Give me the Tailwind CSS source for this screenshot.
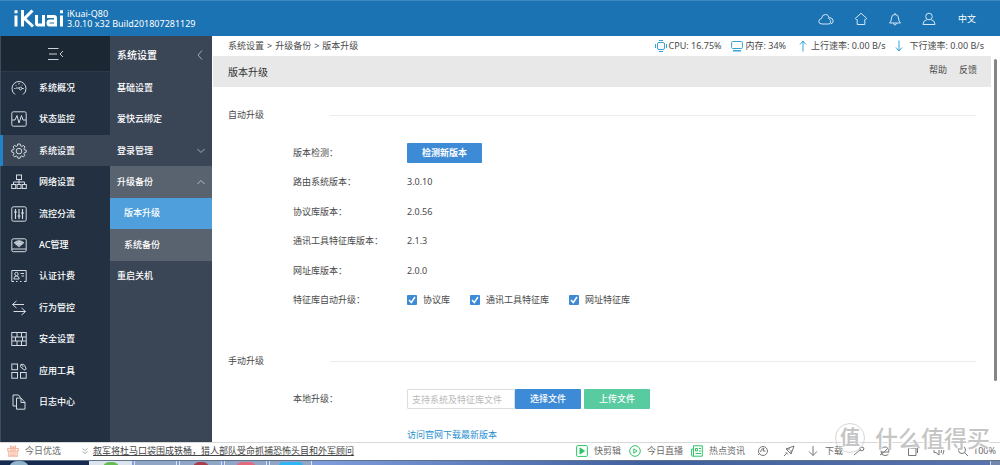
<!DOCTYPE html>
<html lang="zh-CN">
<head>
<meta charset="utf-8">
<meta name="viewport" content="width=device-width, initial-scale=1">
<title>iKuai 版本升级</title>
<script src="https://cdn.jsdelivr.net/npm/@tailwindcss/browser@4"></script>
</head>
<body class="flex h-screen flex-col overflow-hidden bg-white font-['Noto_Sans','Noto_Sans_CJK_SC',sans-serif] text-[9px] leading-3 text-[#4a4a4a]">

<header class="flex h-9 shrink-0 items-center border-t border-[#3d8ac2] bg-[#1b73b3] pr-6 pl-3 text-white">
  <svg class="h-5 w-[53px]" viewBox="0 0 53 20" fill="none" stroke="#fff" stroke-width="3" role="img" aria-label="iKuai">
    <path d="M4 6.500V17.500M10.500 1V17.500M20.500 1.500L12.500 9.500L21 17.500M24.500 6V14.500Q24.500 16 26 16H31.500M31.500 6V17.500M35 7.500H42Q43.500 7.500 43.500 9V16H37.500Q36 16 36 14Q36 12 37.500 12H43.500M49.500 6.500V17.500"/>
    <path d="M2.500 2.800H5.500M48 2.800H51"/>
  </svg>
  <div class="ml-0.5 leading-[10px]">
    <p>iKuai-Q80</p>
    <p>3.0.10 x32 Build201807281129</p>
  </div>
  <nav class="ml-auto flex items-center gap-5" aria-label="快捷入口">
    <button aria-label="云"><svg class="h-3.5 w-4" viewBox="0 0 16 14" fill="none" stroke="#cfe6f7"><path d="M4 12H11Q13.500 11 12.500 8.500Q11.800 7 11 7Q11 2.500 7.500 2.500Q4 2.500 3.500 6.500Q.8 7 .8 9.500Q.8 12 4 12ZM11.500 5.500Q15.200 6 15.200 9Q15.200 11.500 12.500 12"/></svg></button>
    <button aria-label="首页"><svg class="h-3.5 w-3.5" viewBox="0 0 14 14" fill="none" stroke="#cfe6f7"><path d="M7 1.200L12.800 6.500L11.500 7.500H10.800V12.500H3.200V7.500H2.500L1.200 6.500Z"/></svg></button>
    <button aria-label="通知"><svg class="h-3.5 w-3.5" viewBox="0 0 14 14" fill="none" stroke="#cfe6f7"><path d="M7 1V2.500M1.500 11H12.500Q10.500 9.500 10.500 6Q10.500 2.500 7 2.500Q3.500 2.500 3.500 6Q3.500 9.500 1.500 11ZM5.500 11.200Q5.800 13 7 13Q8.200 13 8.500 11.200"/></svg></button>
    <button aria-label="用户"><svg class="h-3.5 w-3.5" viewBox="0 0 14 14" fill="none" stroke="#cfe6f7"><circle cx="7" cy="4.500" r="3.300"/><path d="M4.800 7.700Q1 8.500 1 12.500H13Q13 8.500 9.200 7.700"/></svg></button>
    <button class="pl-0.5">中文</button>
  </nav>
</header>

<div class="flex min-h-0 flex-1">
  <aside class="w-[110px] shrink-0 border-l border-[#3d4c5e] bg-[#223041] font-medium text-white">
    <button class="flex h-9 w-full items-center justify-center border-b border-[#2c3a4b] bg-[#1c2734]" aria-label="收起菜单">
      <svg class="h-3.5 w-4" viewBox="0 0 16 14" fill="none" stroke="#c9d0d8"><path d="M0 1.500H10.500M1 7H9M0 12.500H10.500M15 4L12 7L15 10"/></svg>
    </button>
    <nav class="flex h-[346px] flex-col [&>a]:flex [&>a]:flex-1 [&>a]:items-center [&>a]:gap-3 [&>a]:pl-2.5 [&_svg]:size-4 [&_svg]:fill-none [&_svg]:stroke-[#d5dbe1]" aria-label="主菜单">
      <a href="#"><svg viewBox="0 0 16 16"><path d="M4 14.500Q1 12.500 1 8.500A7 7 0 0 1 15 8.500Q15 12.500 12 14.500M5 8H8.500M8 3V4.500M12.800 8.500H11M3.200 8.500H4.500M4.500 5L5.300 5.800M11.500 5L10.700 5.800"/><circle cx="9.500" cy="8.500" r="1.300"/></svg>系统概况</a>
      <a href="#"><svg viewBox="0 0 16 16"><rect x=".8" y=".8" width="14.400" height="14.400" rx="1.500"/><path d="M1 9H4L6 4.500L8 12L10.500 4.500L12 9H15"/></svg>状态监控</a>
      <a href="#" class="-ml-px border-l-[3px] border-[#2383c9] bg-[#3a4656] !pl-2" aria-current="page"><svg viewBox="0 0 16 16"><path d="M6.800 1H9.200L9.700 2.900L10.800 3.400L12.600 2.500L14 4L13 5.700L13.400 6.800L15.200 7.200V9.200L13.400 9.700L12.900 10.800L13.800 12.500L12.300 14L10.600 13L9.600 13.500L9.100 15.200H6.900L6.400 13.500L5.300 13L3.600 13.900L2.100 12.400L3 10.700L2.600 9.600L.8 9.100V7L2.600 6.600L3 5.500L2.100 3.800L3.600 2.400L5.300 3.300L6.400 2.900Z"/><circle cx="8" cy="8.100" r="2.800"/></svg>系统设置</a>
      <a href="#"><svg viewBox="0 0 16 16"><rect x="5.500" y="1" width="5" height="4.500"/><path d="M8 5.500V10.500M2.500 10.500V8H13.500V10.500"/><rect x=".7" y="10.500" width="4" height="4"/><rect x="6" y="10.500" width="4" height="4"/><rect x="11.300" y="10.500" width="4" height="4"/></svg>网络设置</a>
      <a href="#"><svg viewBox="0 0 16 16"><rect x=".8" y=".8" width="14.400" height="14.400" rx="1.500"/><path d="M4.500 3V13M8 3V13M11.500 3V13M3 6H6M6.500 10H9.500M10 7H13" stroke-width="1.200"/></svg>流控分流</a>
      <a href="#"><svg viewBox="0 0 16 16"><rect x=".8" y="1.800" width="14.400" height="12.900" rx="1.500"/><path d="M1 12H15"/><path d="M3 6Q8 1.500 13 6L8 10.500Z" fill="#aeb8c2" stroke="none"/><path d="M3 6Q8 1.500 13 6M4.800 7.500Q8 4.500 11.200 7.500"/></svg>AC管理</a>
      <a href="#"><svg viewBox="0 0 16 16"><path d="M3 13.500H.8V2.500H15.200V13.500H13M5 13.500H6.500M9 13.500H10.500M9.500 5.500H13M10.500 8H13"/><circle cx="5.500" cy="6" r="1.700"/><path d="M2.800 11Q3 8 5.500 8Q8 8 8.200 11Z"/></svg>认证计费</a>
      <a href="#"><svg viewBox="0 0 16 16"><path d="M13 4.500H1.500M5.500 1L1.500 4.500L5.500 8M2.500 11.500H14.500M10.500 8L14.500 11.500L10.500 15"/></svg>行为管控</a>
      <a href="#"><svg viewBox="0 0 16 16"><rect x=".8" y="1.500" width="14.400" height="13"/><path d="M1 6H15M1 10H15M6 1.500V6M10.500 1.500V6M4.500 6V10M11.500 6V10M6 10V14.500M10.500 10V14.500"/></svg>安全设置</a>
      <a href="#"><svg viewBox="0 0 16 16"><rect x=".8" y="1" width="5.700" height="5.700"/><rect x=".8" y="9.500" width="5.700" height="5.700"/><rect x="9.500" y="9.500" width="5.700" height="5.700"/><path d="M10 1.500Q8.500 3.500 10.500 5L14 7.200L15.200 6L13.800 2.500Q12 .5 10 1.500L12 3.500L11 4.500"/></svg>应用工具</a>
      <a href="#"><svg viewBox="0 0 16 16"><path d="M5 12H2V1H7.500L9.500 3.500"/><path d="M5.500 4H10L14 8.500V15.200H5.500ZM10 4V8.500H14"/></svg>日志中心</a>
    </nav>
  </aside>

  <aside class="w-[102px] shrink-0 bg-[#3a4656] font-medium text-white">
    <div class="flex h-[38px] items-center justify-between pr-[9px] pl-[7px] text-[10px]">
      <h2>系统设置</h2>
      <button aria-label="收起"><svg class="h-2.5 w-1.5" viewBox="0 0 6 10" fill="none" stroke="#a5adb6"><path d="M5 .5L1 5L5 9.500"/></svg></button>
    </div>
    <nav class="-mt-0.5 flex h-[220px] flex-col [&>a]:flex [&>a]:flex-1 [&>a]:items-center [&>a]:justify-between [&>a]:pr-[7px] [&>a]:pl-[7px]" aria-label="子菜单">
      <a href="#">基础设置</a>
      <a href="#">爱快云绑定</a>
      <a href="#">登录管理<svg class="h-1.5 w-2" viewBox="0 0 8 6" fill="none" stroke="#a5adb6"><path d="M.5 1L4 4.500L7.500 1"/></svg></a>
      <a href="#" class="bg-[#59636f]">升级备份<svg class="h-1.5 w-2" viewBox="0 0 8 6" fill="none" stroke="#b5bbc2"><path d="M.5 5L4 1.500L7.500 5"/></svg></a>
      <a href="#" class="bg-[#4e9fdb] !pl-3.5" aria-current="page">版本升级</a>
      <a href="#" class="bg-[#59636f] !pl-3.5">系统备份</a>
      <a href="#">重启关机</a>
    </nav>
  </aside>

  <main class="relative min-w-0 flex-1 overflow-hidden pl-px">
    <div class="flex h-5 items-center justify-between pr-4 pl-[15px]">
      <nav class="flex gap-[3px]" aria-label="面包屑"><a href="#">系统设置</a><span>&gt;</span><a href="#">升级备份</a><span>&gt;</span><span>版本升级</span></nav>
      <ul class="flex items-center gap-[9px] [&>li]:flex [&>li]:items-center [&>li]:gap-1 [&_svg]:h-3 [&_svg]:fill-none [&_svg]:stroke-[#36a2da]">
        <li class="!gap-0.5"><svg class="w-3" viewBox="0 0 12 12"><rect x="2.500" y="2.500" width="7" height="7" rx="1.500"/><path d="M4 .5H8M4 11.500H8M.5 4V8M11.500 4V8"/></svg>CPU: 16.75%</li>
        <li class="!gap-[3px]"><svg class="w-3" viewBox="0 0 12 12"><rect x=".6" y="1.500" width="10.800" height="7" rx="1"/><path d="M2 10.800H10" stroke-width="1.500"/></svg>内存: 34%</li>
        <li class="pl-1"><svg class="w-2" viewBox="0 0 8 12"><path d="M4 11.500V1M1 4.500L4 1L7 4.500"/></svg>上行速率: 0.00 B/s</li>
        <li class="!gap-[7px]"><svg class="w-2" viewBox="0 0 8 12"><path d="M4 .5V11M1 7.500L4 11L7 7.500"/></svg>下行速率: 0.00 B/s</li>
      </ul>
    </div>
    <div class="mr-[9px] flex h-[31px] items-center justify-between bg-[#e8e8e8] pr-[14px] pl-[15px]">
      <h1 class="text-[10px] text-[#333]">版本升级</h1>
      <div class="flex gap-3 pb-1"><a href="#">帮助</a><a href="#">反馈</a></div>
    </div>

    <form class="pr-6 pl-[15px]">
      <section class="pt-[22px]">
        <div class="flex items-center"><h2 class="w-[102px]">自动升级</h2><hr class="flex-1 border-[#ececec]"></div>
        <dl class="mt-[17px] ml-[65px] flex h-[177px] flex-col [&>div]:flex [&>div]:flex-1 [&>div]:items-center [&_dt]:w-[114px]">
          <div><dt>版本检测：</dt><dd><button type="button" class="flex h-5 w-[75px] items-center justify-center rounded-[1px] bg-[#3d8bd6] font-bold text-white">检测新版本</button></dd></div>
          <div><dt>路由系统版本：</dt><dd>3.0.10</dd></div>
          <div><dt>协议库版本：</dt><dd>2.0.56</dd></div>
          <div><dt>通讯工具特征库版本：</dt><dd>2.1.3</dd></div>
          <div><dt>网址库版本：</dt><dd>2.0.0</dd></div>
          <div><dt>特征库自动升级：</dt>
            <dd class="flex gap-5 [&>label]:flex [&>label]:items-center [&>label]:gap-1.5 [&_input]:size-2.5 [&_input]:appearance-none [&_input]:rounded-[1px] [&_input]:bg-[#3d8bd6] [&_label>span]:grid [&_label>span]:place-items-center [&_label>span>*]:col-start-1 [&_label>span>*]:row-start-1 [&_svg]:pointer-events-none [&_svg]:size-2.5">
              <label><span><input type="checkbox" checked><svg viewBox="0 0 10 10" fill="none" stroke="#fff" stroke-width="1.500"><path d="M2 5L4.300 7.500L8 2"/></svg></span>协议库</label>
              <label><span><input type="checkbox" checked><svg viewBox="0 0 10 10" fill="none" stroke="#fff" stroke-width="1.500"><path d="M2 5L4.300 7.500L8 2"/></svg></span>通讯工具特征库</label>
              <label><span><input type="checkbox" checked><svg viewBox="0 0 10 10" fill="none" stroke="#fff" stroke-width="1.500"><path d="M2 5L4.300 7.500L8 2"/></svg></span>网址特征库</label>
            </dd></div>
        </dl>
      </section>
      <section class="mt-10">
        <div class="flex items-center"><h2 class="w-[102px]">手动升级</h2><hr class="flex-1 border-[#ececec]"></div>
        <div class="mt-[22px] ml-[65px] flex items-center">
          <label for="file" class="w-[114px]">本地升级：</label>
          <input id="file" type="text" placeholder="支持系统及特征库文件" class="h-5 w-[108px] rounded-l-[1px] border border-[#ddd] px-1 placeholder:text-[#b9b9b9]">
          <button type="button" class="h-5 w-[66px] rounded-[1px] bg-[#3d8bd6] font-medium text-white">选择文件</button>
          <button type="button" class="ml-[3px] h-5 w-[66px] rounded-[1px] bg-[#59cba1] font-medium text-white">上传文件</button>
        </div>
        <a href="#" class="mt-5 ml-[179px] block w-fit text-[#2a8fd0]">访问官网下载最新版本</a>
      </section>
    </form>
    <div class="absolute top-[23px] right-[3px] h-[322px] w-[3px] rounded-full bg-[#858585]"></div>
  </main>
</div>

<footer class="relative shrink-0">
  <div class="flex h-[18px] items-center border-t border-[#d8d8d8] bg-white pr-1 pb-0.5 pl-[7px] text-[#6b6b6b]">
    <svg class="size-3" viewBox="0 0 12 12" fill="none" stroke="#f3b59c" stroke-width="1.200"><path d="M.8 3.500H11.200V6H.8ZM1.800 6V11.200H10.200V6M6 3.500V11M6 3.500Q2.500 3.500 3.500 1.200Q5 .5 6 3.500Q7 .5 8.500 1.200Q9.500 3.500 6 3.500M4 3.500V11M8 3.500V11"/></svg>
    <a href="#" class="ml-1.5">今日优选</a>
    <svg class="ml-[21px] size-1.5" viewBox="0 0 6 6" fill="none" stroke="#aaa"><path d="M.5 .5L3 2.500L5.500 .5M.5 3.500L3 5.500L5.500 3.500"/></svg>
    <a href="#" class="ml-[5px] text-[#444] underline">叙军将杜马口袋围成铁桶，猎人部队受命抓捕恐怖头目和外军顾问</a>
    <div class="ml-auto flex items-center [&_svg]:size-3 [&_svg]:fill-none [&_svg]:stroke-[#777]">
      <a href="#" class="flex items-center gap-1.5"><svg class="!stroke-[#2fc267]" viewBox="0 0 12 12"><rect x=".6" y=".6" width="10.800" height="10.800" rx="1"/><path d="M4 3L8.500 6L4 9Z" fill="#2fc267"/></svg>快剪辑</a>
      <a href="#" class="ml-2 flex items-center gap-1.5"><svg class="!stroke-[#2fc267]" viewBox="0 0 12 12"><circle cx="6" cy="6" r="5.300"/><path d="M4.800 3.800L8 6L4.800 8.200Z"/></svg>今日直播</a>
      <a href="#" class="ml-2 flex items-center gap-1.5"><svg class="!stroke-[#2fc267]" viewBox="0 0 12 12"><path d="M2.500 .8H11.300V11.200H1Q.6 11 .6 10V4H2.500ZM2.500 4V11M4.500 3.500H6.500V6H4.500ZM8 3.500H10M8 6H10M4.500 8.500H10"/></svg>热点资讯</a>
      <button class="ml-3" aria-label="加速"><svg viewBox="0 0 12 12"><circle cx="6" cy="6" r="4.500"/><path d="M3.500 7Q4 3.500 7 3L6 6H8.500M1 10L3 8"/></svg></button>
      <button class="ml-3.5" aria-label="插件"><svg viewBox="0 0 12 12"><path d="M1 11L4 8M3 4L8 9L10 4L11 1L7 2.500ZM3 4H7M8 9V5M2.500 7L5 9.500"/></svg></button>
      <button class="ml-3 flex items-center gap-1.5"><svg viewBox="0 0 12 12"><path d="M6 1V10.500M2 6.500L6 10.500L10 6.500"/></svg>下载</button>
      <button class="ml-2.5" aria-label="工具"><svg viewBox="0 0 12 12"><path d="M1 10L7 5M6.500 3Q9 1 11 3Q11 6 8 6Z"/></svg></button>
      <button class="ml-3.5" aria-label="浏览模式"><svg viewBox="0 0 12 12"><path d="M2 7H10Q10 2 6 2Q2 2 2 6.500Q2 10.500 6 10.500Q8.500 10.500 9.500 9M1 10Q6 7 10.500 1.500"/></svg></button>
      <button class="ml-4" aria-label="窗口"><svg viewBox="0 0 12 12"><path d="M1.500 3H9V10.500H1.500ZM4 1H10.500V8"/></svg></button>
      <button class="ml-3.5" aria-label="声音"><svg viewBox="0 0 12 12"><path d="M1 4.500H3L6 2V10L3 7.500H1ZM8 4Q9 6 8 8M9.800 2.500Q12 6 9.800 9.500"/></svg></button>
      <button class="ml-3 flex items-center gap-1"><svg viewBox="0 0 12 12"><circle cx="5" cy="5" r="3.500"/><path d="M7.500 7.500L11 11"/></svg>100%</button>
    </div>
  </div>
  <div class="flex h-[5px] overflow-hidden border-t border-[#62718c] bg-[#7f9edb]">
    <div class="flex w-[89px] justify-center bg-[#172c50] pr-[52px]"><span class="h-4 w-5 shrink-0 rounded-full bg-[#8eb3ca]"></span></div>
    <div class="flex gap-[2px] [&>span]:flex [&>span]:w-[43px] [&>span]:justify-center [&>span]:border-x [&>span]:border-[#dce5f0] [&>span]:bg-[#90a6c6]">
      <span class="!bg-[#dce5ed]"><i class="mt-px h-3 w-4 rounded-full bg-[#64bd54]"></i></span>
      <span></span>
      <span><i class="mt-px h-3 w-4 rounded-full bg-[#aa3c4b]"></i></span>
      <span><i class="mt-px h-3 w-5 rounded-full bg-[#e6687c]"></i></span>
      <span><i class="mt-px h-3 w-6 rounded-sm bg-[#2fb4f5]"></i></span>
    </div>
    <div class="flex-1 bg-linear-to-r from-[#7f9edb] via-[#3f5f9c] to-[#5873ad]"></div>
    <div class="w-2.5 border-l border-[#c7d2e4] bg-[#7387ac]"></div>
  </div>
  <div class="pointer-events-none absolute right-2.5 bottom-3 flex items-center gap-2.5 text-[23px] leading-7 font-medium text-[#bdbdbd]/90 [text-shadow:-1px_-1px_0_#fff,1px_1px_0_#fff]" aria-hidden="true">
    <span class="flex size-[30px] items-center justify-center rounded-full border border-[#ccc]/80 text-[20px] font-bold">值</span>
    <span>什么值得买</span>
  </div>
</footer>
</body>
</html>
